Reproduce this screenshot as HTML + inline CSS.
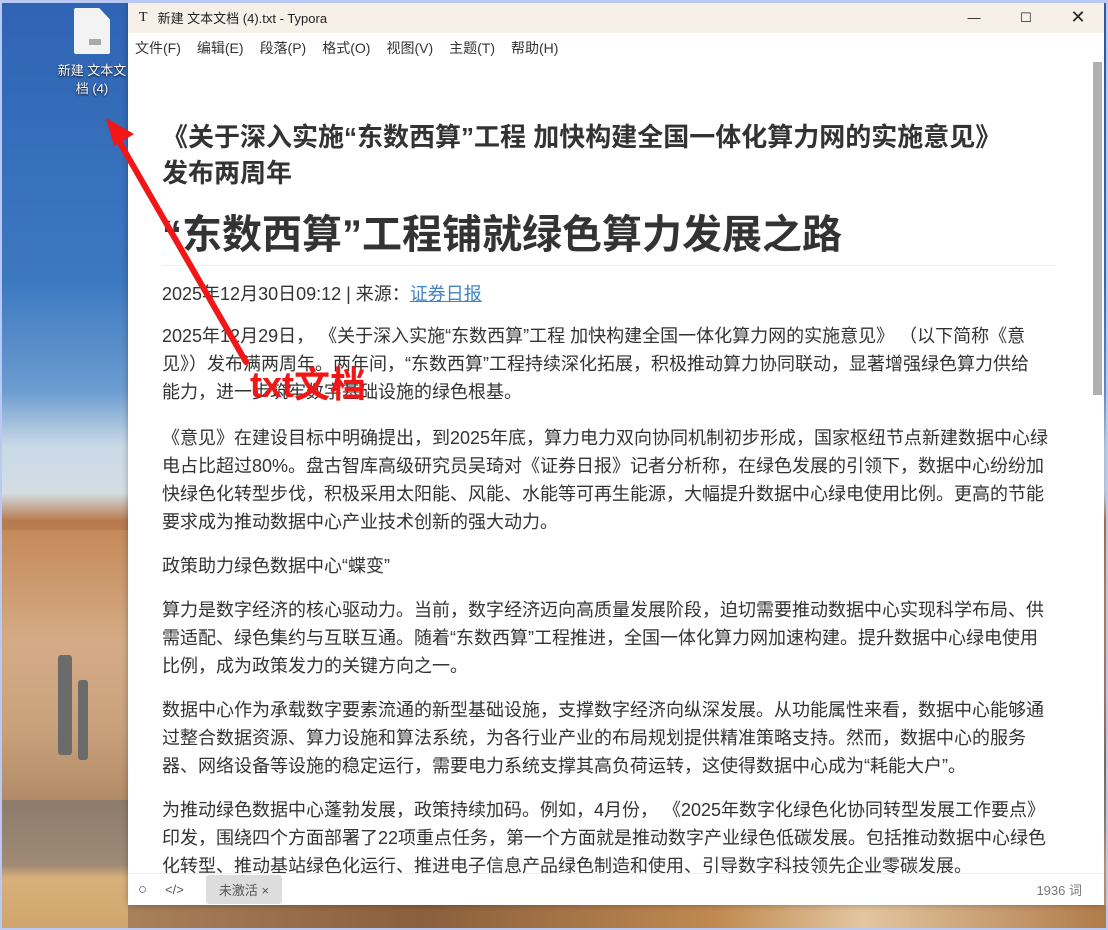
<!DOCTYPE html>
<html><head><meta charset="utf-8"><style>
*{margin:0;padding:0;box-sizing:border-box}
body{width:1108px;height:930px;overflow:hidden;position:relative;font-family:"Liberation Sans","Noto Sans CJK SC",sans-serif;background:#3a6fb8}
.desk{position:absolute;left:0;top:0;width:1108px;height:930px;background:linear-gradient(180deg,#2f64b4 0%,#3c78c0 30%,#6c9cd0 42%,#c9d9e6 48%,#d3dde3 53%,#b87a4e 56%,#c58e5f 65%,#b48664 75%,#8a7868 82%,#9c8878 88%,#d2a870 93%,#c99a62 100%)}
.rock{position:absolute;left:0;top:530px;width:130px;height:280px;background:linear-gradient(180deg,#c58a5a,#d4ab86 40%,#c9a27c 70%,#b08866)}
.pipe{position:absolute;background:#6b6b6b;border-radius:3px}
.ground{position:absolute;left:0;top:800px;width:130px;height:130px;background:linear-gradient(180deg,#8d7b6b,#a08a76 50%,#d8b07a 60%,#d0a56c)}
.btm{position:absolute;left:128px;top:905px;width:980px;height:25px;background:linear-gradient(90deg,#a8805a,#8a5f3c 30%,#c08a50 60%,#e3c6a0 75%,#b07a48)}
.frame{position:absolute;left:0;top:0;width:1108px;height:930px;border:2px solid #b9c9f3;border-top-width:3px}
.icon{position:absolute;left:74px;top:8px;width:36px;height:46px;background:#f3f3f3;border-radius:2px;clip-path:polygon(0 0,70% 0,100% 25%,100% 100%,0 100%)}
.icon i{position:absolute;left:15px;top:31px;width:12px;height:6px;background:#aaa}
.ilabel{position:absolute;left:52px;top:62px;width:80px;color:#fff;font-size:13px;line-height:18px;text-align:center;text-shadow:0 1px 2px #000}
.win{position:absolute;left:128px;top:2px;width:976px;height:903px;background:#fff;box-shadow:0 0 6px rgba(0,0,0,.3);overflow:hidden}
.tb{height:31px;background:#f6f0e8;font-size:13px;color:#222;display:flex;align-items:center}
.tb .t{font-family:"Liberation Serif",serif;font-size:14px;margin:0 10px 0 11px}
.ctl{position:absolute;top:0;right:0;display:flex}
.ctl span{width:52px;height:31px;display:flex;align-items:center;justify-content:center}
.menu{height:30px;display:flex;align-items:center;font-size:14px;color:#333;padding-left:7px}
.menu span{margin-right:16px}
.content{position:absolute;left:34px;top:100px;width:900px;color:#333;white-space:nowrap}
h2{font-size:26px;line-height:36px;font-weight:bold;margin-top:17px;color:#333}
h1{font-size:40px;line-height:52px;font-weight:bold;margin-top:18px;padding-bottom:4px;border-bottom:1px solid #eee;color:#333;width:894px}
p{font-size:18px;line-height:28px;margin-top:16px}
.date{margin-top:14px}
.p1{margin-top:14px}
.p2{margin-top:18px}
a{color:#4183c4;text-decoration:underline}
.sb{position:absolute;right:2px;top:60px;width:9px;height:333px;background:#b0b0b0}
.status{position:absolute;left:0;bottom:0;width:976px;height:32px;background:#fff;border-top:1px solid #eee;font-size:13px;color:#555;display:flex;align-items:center}
.tag{background:#ddd;border-radius:3px;padding:5px 13px;margin-left:22px}
.arrow{position:absolute;left:0;top:0}
.lbl{position:absolute;left:250px;top:365px;color:#f21616;font-size:36px;font-weight:bold;line-height:40px}
</style></head><body>
<div class="desk"></div><div class="rock"></div>
<div class="pipe" style="left:58px;top:655px;width:14px;height:100px"></div>
<div class="pipe" style="left:78px;top:680px;width:10px;height:80px"></div>
<div class="ground"></div><div class="btm"></div>
<div class="icon"><i></i></div>
<div class="ilabel">新建 文本文<br>档 (4)</div>
<div class="win">
<div class="tb"><span class="t">T</span>新建 文本文档 (4).txt - Typora
<div class="ctl"><span>&#8212;</span><span>&#9744;</span><span style="font-size:18px">&#10005;</span></div></div>
<div class="menu"><span>文件(F)</span><span>编辑(E)</span><span>段落(P)</span><span>格式(O)</span><span>视图(V)</span><span>主题(T)</span><span>帮助(H)</span></div>
<div class="content">
<h2>《关于深入实施“东数西算”工程 加快构建全国一体化算力网的实施意见》<br>发布两周年</h2>
<h1>“东数西算”工程铺就绿色算力发展之路</h1>
<p class="date">2025年12月30日09:12 | 来源：<a>证券日报</a></p>
<p class="p1">2025年12月29日， 《关于深入实施“东数西算”工程 加快构建全国一体化算力网的实施意见》 （以下简称《意<br>见》）发布满两周年。两年间，“东数西算”工程持续深化拓展，积极推动算力协同联动，显著增强绿色算力供给<br>能力，进一步筑牢数字基础设施的绿色根基。</p>
<p class="p2">《意见》在建设目标中明确提出，到2025年底，算力电力双向协同机制初步形成，国家枢纽节点新建数据中心绿<br>电占比超过80%。盘古智库高级研究员吴琦对《证券日报》记者分析称，在绿色发展的引领下，数据中心纷纷加<br>快绿色化转型步伐，积极采用太阳能、风能、水能等可再生能源，大幅提升数据中心绿电使用比例。更高的节能<br>要求成为推动数据中心产业技术创新的强大动力。</p>
<p>政策助力绿色数据中心“蝶变”</p>
<p>算力是数字经济的核心驱动力。当前，数字经济迈向高质量发展阶段，迫切需要推动数据中心实现科学布局、供<br>需适配、绿色集约与互联互通。随着“东数西算”工程推进，全国一体化算力网加速构建。提升数据中心绿电使用<br>比例，成为政策发力的关键方向之一。</p>
<p>数据中心作为承载数字要素流通的新型基础设施，支撑数字经济向纵深发展。从功能属性来看，数据中心能够通<br>过整合数据资源、算力设施和算法系统，为各行业产业的布局规划提供精准策略支持。然而，数据中心的服务<br>器、网络设备等设施的稳定运行，需要电力系统支撑其高负荷运转，这使得数据中心成为“耗能大户”。</p>
<p>为推动绿色数据中心蓬勃发展，政策持续加码。例如，4月份， 《2025年数字化绿色化协同转型发展工作要点》<br>印发，围绕四个方面部署了22项重点任务，第一个方面就是推动数字产业绿色低碳发展。包括推动数据中心绿色<br>化转型、推动基站绿色化运行、推进电子信息产品绿色制造和使用、引导数字科技领先企业零碳发展。</p>
</div>
<div class="sb"></div>
<div class="status"><span style="margin-left:10px;font-size:15px">○</span><span style="margin-left:18px">&lt;/&gt;</span><span class="tag">未激活 ×</span><span style="margin-left:auto;margin-right:22px;color:#777">1936 词</span></div>
</div>
<svg class="arrow" width="1108" height="930"><line x1="246" y1="362" x2="116" y2="136" stroke="#f21616" stroke-width="6" stroke-linecap="round"/><polygon points="106,118 134,134 114,146" fill="#f21616"/></svg>
<div class="lbl">txt文档</div>
<div class="frame"></div>
</body></html>
